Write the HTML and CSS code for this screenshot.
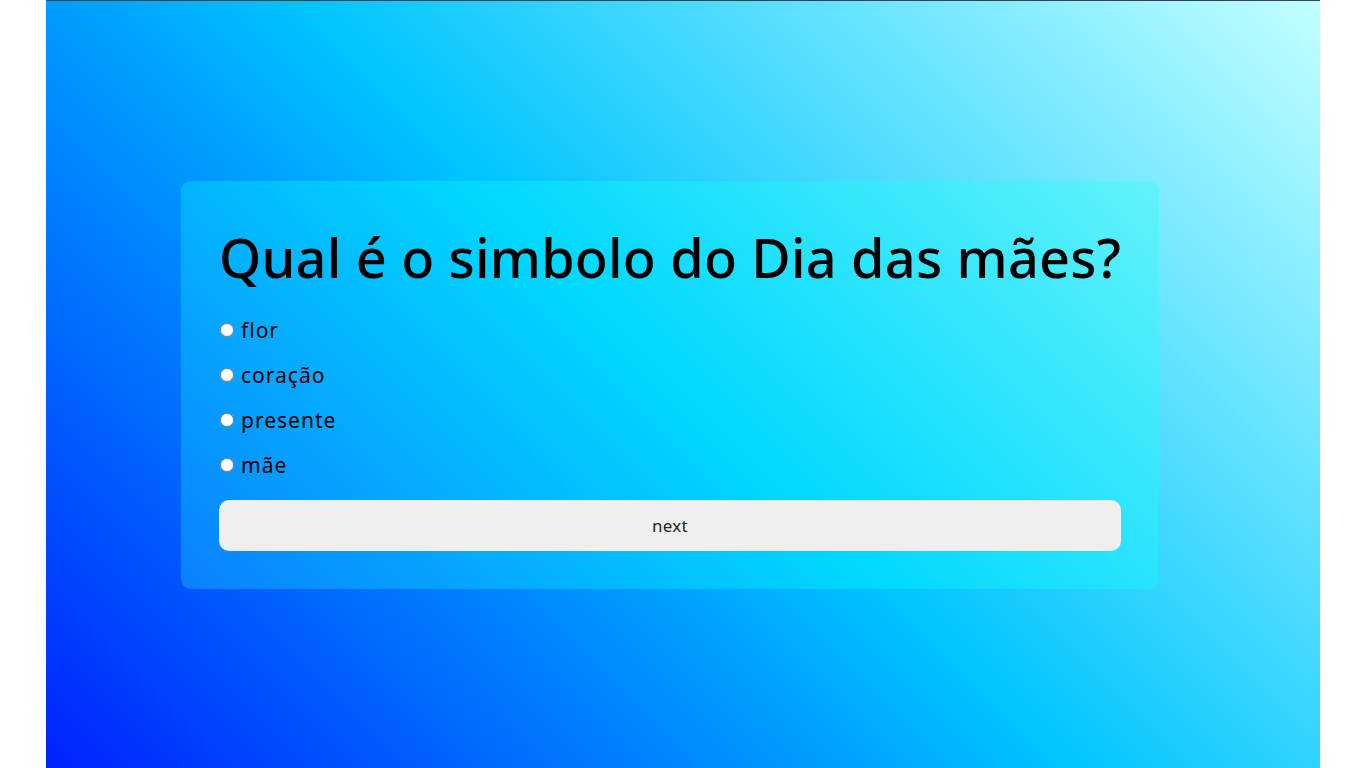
FILE: index.html
```html
<!DOCTYPE html>
<html lang="pt">
<head>
<meta charset="utf-8">
<title>Quiz</title>
<link rel="stylesheet" href="styles.css">
</head>
<body>
<main class="page">
  <section class="card">
    <h1 class="question">Qual é o simbolo do Dia das mães?</h1>
    <ul class="answers">
      <li><label class="answer"><input type="radio" name="a"><span>flor</span></label></li>
      <li><label class="answer"><input type="radio" name="a"><span>coração</span></label></li>
      <li><label class="answer"><input type="radio" name="a"><span>presente</span></label></li>
      <li><label class="answer"><input type="radio" name="a"><span>mãe</span></label></li>
    </ul>
    <button class="next" type="button">next</button>
  </section>
</main>
</body>
</html>
```
FILE: styles.css
```css
html, body {
  margin: 0;
  padding: 0;
  background: #ffffff;
}
body {
  font-family: "Noto Sans", "Open Sans", sans-serif;
}
.page {
  box-sizing: border-box;
  margin: 0 46px;
  height: 768px;
  border-top: 1px solid #3d404c;
  background: linear-gradient(45deg, #0022ff 0%, #00c4ff 50%, #c2ffff 100%);
  display: flex;
  align-items: center;
  justify-content: center;
  padding-right: 26px;
}
.card {
  box-sizing: border-box;
  width: 978px;
  padding: 38px;
  border-radius: 10px;
  background: linear-gradient(45deg, #0a80ff 0%, #00d8ff 50%, #62f3fa 100%);
}
.question {
  margin: 0 0 13px;
  font-size: 54px;
  font-weight: 500;
  line-height: 76px;
  letter-spacing: 0.2px;
  white-space: nowrap;
  color: #000;
}
.answers {
  list-style: none;
  margin: 0;
  padding: 0;
}
.answers li {
  height: 45px;
  display: flex;
  align-items: center;
}
.answer {
  display: flex;
  align-items: center;
  gap: 7px;
  font-size: 21px;
  line-height: 28px;
  letter-spacing: 1px;
  color: #000;
}
.answer input {
  margin: 0 0 0 1px;
  width: 14px;
  height: 14px;
}
.next {
  display: block;
  width: 100%;
  height: 51px;
  margin-top: 12px;
  border: none;
  border-radius: 10px;
  background: #efefef;
  font-family: "Noto Sans", "Open Sans", sans-serif;
  font-size: 17px;
  letter-spacing: 0.3px;
  color: #222;
}
```
